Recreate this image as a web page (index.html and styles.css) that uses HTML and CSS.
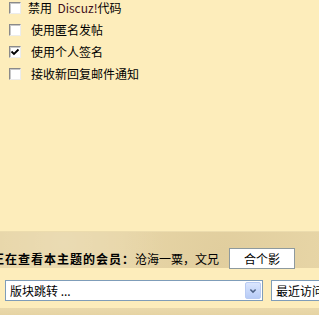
FILE: index.html
```html
<!DOCTYPE html>
<html>
<head>
<meta charset="utf-8">
<link rel="stylesheet" href="styles.css">
</head>
<body>
<div class="options">
  <label class="opt"><span class="cb"></span><span class="lbl first">禁用&nbsp; <span class="dz">Discuz!</span>代码</span></label>
  <label class="opt"><span class="cb"></span><span class="lbl">使用匿名发帖</span></label>
  <label class="opt"><span class="cb"><svg viewBox="0 0 10 10" width="10" height="10"><path d="M1.5 4.5 L4 7 L8.5 2.5" fill="none" stroke="#000" stroke-width="1.8"/></svg></span><span class="lbl">使用个人签名</span></label>
  <label class="opt"><span class="cb"></span><span class="lbl">接收新回复邮件通知</span></label>
</div>
<div class="band">
  <span class="viewers"><b>正在查看本主题的会员：</b>沧海一粟，文兄</span>
  <span class="btn">合个影</span>
</div>
<div class="jump">
  <div class="sel main"><span class="seltext">版块跳转 ...</span><span class="arrow"><svg viewBox="0 0 16 16" width="16" height="16"><path d="M4.5 6 L8 9.5 L11.5 6" fill="none" stroke="#4d6185" stroke-width="2"/></svg></span></div>
  <div class="sel recent"><span class="seltext">最近访问...</span></div>
</div>
<div class="bottomband"></div>
</body>
</html>
```
FILE: styles.css
```css
html, body {
  margin: 0;
  padding: 0;
}
body {
  background: #fdedbb;
  font-family: "SimSun", "Noto Sans CJK SC", sans-serif;
  font-size: 12px;
  color: #000;
  width: 319px;
  height: 315px;
  overflow: hidden;
}
.options {
  margin-top: -3px;
  display: flex;
  flex-direction: column;
}
.opt {
  height: 22px;
  display: flex;
  align-items: center;
  padding-left: 9px;
}
.cb {
  box-sizing: border-box;
  width: 12px;
  height: 12px;
  background: #fff;
  border: 1px solid;
  border-color: #8a8a8a #ececec #ececec #8a8a8a;
  box-shadow: inset 1px 1px 0 #c8c8c8;
  display: flex;
  align-items: center;
  justify-content: center;
}
.cb svg {
  display: block;
}
.lbl {
  margin-left: 10px;
  line-height: 14px;
}
.lbl.first {
  margin-left: 7px;
}
.dz {
  color: #3f0f1c;
}
.band {
  margin-top: 146px;
  height: 37px;
  box-sizing: border-box;
  padding-top: 16px;
  display: flex;
  align-items: center;
  background:
    radial-gradient(circle at 20% 30%, rgba(255,255,255,0.15), transparent 40%),
    radial-gradient(circle at 70% 60%, rgba(150,120,60,0.08), transparent 45%),
    #e7d5a6;
  border-top: 1px solid #ecdcae;
  white-space: nowrap;
}
.viewers {
  margin-left: -8px;
  line-height: 21px;
}
.viewers b {
  letter-spacing: 1px;
}
.btn {
  margin-left: 10px;
  width: 66px;
  height: 21px;
  box-sizing: border-box;
  border: 1px solid #8e9a9e;
  background: #fff;
  display: flex;
  align-items: center;
  justify-content: center;
}
.jump {
  height: 40px;
  box-sizing: border-box;
  padding-top: 12px;
  padding-left: 5px;
  display: flex;
  white-space: nowrap;
  overflow: hidden;
}
.sel {
  height: 21px;
  box-sizing: border-box;
  border: 1px solid #7f9db9;
  background: #fff;
  display: flex;
  align-items: center;
  flex-shrink: 0;
}
.sel.main {
  width: 258px;
  justify-content: space-between;
  padding-left: 4px;
  padding-right: 1px;
}
.sel.recent {
  margin-left: 8px;
  width: 80px;
  padding-left: 4px;
}
.seltext {
  line-height: 16px;
}
.arrow {
  width: 16px;
  height: 17px;
  box-sizing: border-box;
  border: 1px solid #b9cbf3;
  border-radius: 2px;
  background: linear-gradient(#dbe6fe, #b7cbf6);
  display: flex;
  align-items: center;
  justify-content: center;
}
.arrow svg {
  display: block;
  width: 12px;
  height: 12px;
}
.bottomband {
  height: 10px;
  background: linear-gradient(#ead9ab, #e4d1a0);
}
```
